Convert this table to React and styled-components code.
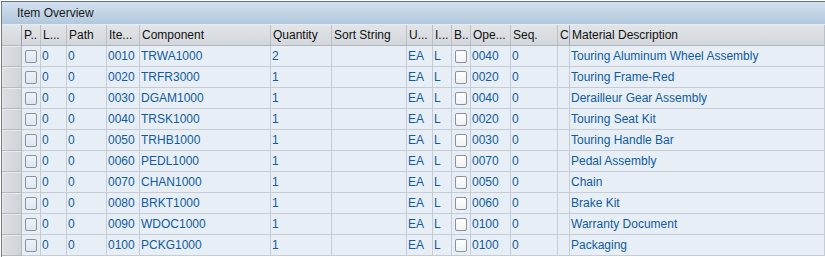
import React from 'react';
import styled, { createGlobalStyle } from 'styled-components';

const COLUMNS = '20px 19px 26px 40px 33px 131px 61px 75px 26px 19px 19px 40px 47px 12px 1fr';

const headers = ['', 'P..', 'L...', 'Path', 'Ite...', 'Component', 'Quantity', 'Sort String', 'U...', 'I...', 'B..', 'Ope...', 'Seq.', 'C', 'Material Description'];

const items = [
  ['0010', 'TRWA1000', '2', '0040', 'Touring Aluminum Wheel Assembly'],
  ['0020', 'TRFR3000', '1', '0020', 'Touring Frame-Red'],
  ['0030', 'DGAM1000', '1', '0040', 'Derailleur Gear Assembly'],
  ['0040', 'TRSK1000', '1', '0020', 'Touring Seat Kit'],
  ['0050', 'TRHB1000', '1', '0030', 'Touring Handle Bar'],
  ['0060', 'PEDL1000', '1', '0070', 'Pedal Assembly'],
  ['0070', 'CHAN1000', '1', '0050', 'Chain'],
  ['0080', 'BRKT1000', '1', '0060', 'Brake Kit'],
  ['0090', 'WDOC1000', '1', '0100', 'Warranty Document'],
  ['0100', 'PCKG1000', '1', '0100', 'Packaging']
];

const GlobalStyle = createGlobalStyle`
  html, body {
    margin: 0;
    padding: 0;
    background: #ffffff;
  }
  body {
    font-family: "Liberation Sans", Arial, sans-serif;
    font-size: 12px;
  }
`;

const Panel = styled.div`
  width: 824px;
  height: 256px;
  margin: 1px 0 0 1px;
  border-left: 1px solid #6f7d8b;
  border-top: 1px solid #65727f;
  box-sizing: border-box;
  overflow: hidden;
  background: #ffffff;
`;

const TitleBar = styled.div`
  height: 22px;
  line-height: 22px;
  padding-left: 15px;
  color: #1a1a1a;
  background: linear-gradient(#d3e1ef, #b1c8dd);
  border-bottom: 1px solid #e6ecf2;
`;

const Row = styled.div`
  display: grid;
  grid-template-columns: ${COLUMNS};
  height: 21px;
`;

const HeadCell = styled.div`
  box-sizing: border-box;
  height: 21px;
  line-height: 20px;
  padding-left: 2px;
  white-space: nowrap;
  overflow: hidden;
  color: #111;
  background: linear-gradient(#e2e5e8, #d3d7db);
  border-right: 1px solid ${p => (p.$strong ? '#9aa3ad' : '#b9c0c8')};
  border-bottom: 1px solid #aeb6bf;
`;

const Cell = styled.div`
  box-sizing: border-box;
  height: 21px;
  line-height: 20px;
  padding-left: ${p => (p.$pad != null ? p.$pad : 1)}px;
  white-space: nowrap;
  overflow: hidden;
  color: #0f5c9e;
  background: #e8eef5;
  border-right: 1px solid #c4ccd6;
  border-bottom: 1px solid #c4ccd6;
  display: flex;
  align-items: center;
`;

const Selector = styled.div`
  box-sizing: border-box;
  height: 21px;
  background: linear-gradient(90deg, #dcdfe2, #cfd3d7);
  border-right: 1px solid #b3bac2;
  border-bottom: 1px solid #b3bac2;
  box-shadow: inset 1px 1px 0 #e9ebed;
`;

const Check = styled.span`
  box-sizing: border-box;
  display: inline-block;
  width: 12px;
  height: 13px;
  border: 1px solid #8e9297;
  border-radius: 2px;
  background: ${p => (p.$white ? 'linear-gradient(#ffffff, #eef1f4)' : 'linear-gradient(#eef3f8, #dde7f1)')};
`;

function ItemRow({ item }) {
  const [no, comp, qty, op, desc] = item;
  return (
    <Row>
      <Selector />
      <Cell $pad={3}>
        <Check />
      </Cell>
      <Cell>0</Cell>
      <Cell>0</Cell>
      <Cell>{no}</Cell>
      <Cell>{comp}</Cell>
      <Cell>{qty}</Cell>
      <Cell />
      <Cell>EA</Cell>
      <Cell>L</Cell>
      <Cell $pad={3}>
        <Check $white />
      </Cell>
      <Cell>{op}</Cell>
      <Cell>0</Cell>
      <Cell />
      <Cell>{desc}</Cell>
    </Row>
  );
}

export default function App() {
  return (
    <>
      <GlobalStyle />
      <Panel>
        <TitleBar>Item Overview</TitleBar>
        <Row>
          {headers.map((h, i) => (
            <HeadCell key={i} $strong={i === 0 || i === 13}>
              {h}
            </HeadCell>
          ))}
        </Row>
        {items.map(item => (
          <ItemRow key={item[0]} item={item} />
        ))}
      </Panel>
    </>
  );
}
